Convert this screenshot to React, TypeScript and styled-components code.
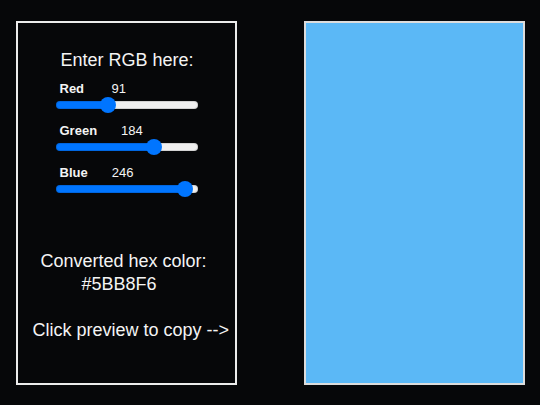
import React, { useState } from "react";
import styled, { createGlobalStyle } from "styled-components";

const GlobalStyle = createGlobalStyle`
  html, body {
    margin: 0;
    padding: 0;
    background: #060709;
  }
  body {
    font-family: "Liberation Sans", Arial, sans-serif;
    color: #f4f4f4;
  }
`;

const Page = styled.div`
  height: 405px;
  display: flex;
  align-items: center;
  justify-content: center;
  gap: 67px;
`;

const Panel = styled.div`
  box-sizing: border-box;
  width: 221px;
  height: 364px;
  border: 2px solid #ececec;
  display: flex;
  flex-direction: column;
  align-items: flex-start;
`;

const Controls = styled(Panel)`
  padding-top: 27px;
`;

const Preview = styled(Panel)<{ $color: string }>`
  border-color: #dcdcdc;
  background: ${(p) => p.$color};
  cursor: pointer;
`;

const Line = styled.div<{ $indent: number; $gap?: number }>`
  font-size: 18px;
  line-height: 21px;
  margin-left: ${(p) => p.$indent}px;
  margin-top: ${(p) => p.$gap ?? 0}px;
  white-space: nowrap;
`;

const Channel = styled.div`
  display: flex;
  flex-direction: column;
  gap: 1px;
  margin-left: 38px;
  margin-top: 10px;
`;

const ChannelHead = styled.div`
  display: flex;
  gap: 24px;
  margin-left: 4px;
  font-size: 13px;
  line-height: 15px;
`;

const ChannelName = styled.span`
  font-weight: 700;
  min-width: 28px;
`;

const ChannelValue = styled.span`
  font-weight: 400;
`;

const Range = styled.input`
  -webkit-appearance: none;
  appearance: none;
  display: block;
  margin: 0;
  padding: 0;
  width: 142px;
  height: 16px;
  background: transparent;
  cursor: pointer;

  &::-webkit-slider-runnable-track {
    height: 8px;
    border-radius: 4px;
    background: linear-gradient(
      to right,
      #0075ff calc(8px + (100% - 16px) * var(--ratio)),
      #efefef 0
    );
    box-shadow: inset 0 0 0 1px rgba(0, 0, 0, 0.12);
  }

  &::-webkit-slider-thumb {
    -webkit-appearance: none;
    appearance: none;
    width: 16px;
    height: 16px;
    margin-top: -4px;
    border-radius: 50%;
    background: #0075ff;
    border: none;
  }
`;

type ChannelKey = "r" | "g" | "b";

const channels: { key: ChannelKey; name: string }[] = [
  { key: "r", name: "Red" },
  { key: "g", name: "Green" },
  { key: "b", name: "Blue" },
];

const toHex = (n: number) => n.toString(16).padStart(2, "0").toUpperCase();

export default function App() {
  const [rgb, setRgb] = useState<Record<ChannelKey, number>>({ r: 91, g: 184, b: 246 });
  const hex = `#${toHex(rgb.r)}${toHex(rgb.g)}${toHex(rgb.b)}`;

  const copy = () => {
    navigator.clipboard?.writeText(hex).catch(() => undefined);
  };

  return (
    <>
      <GlobalStyle />
      <Page>
        <Controls>
          <Line $indent={43}>Enter RGB here:</Line>
          {channels.map((c) => (
            <Channel key={c.key}>
              <ChannelHead>
                <ChannelName>{c.name}</ChannelName>
                <ChannelValue>{rgb[c.key]}</ChannelValue>
              </ChannelHead>
              <Range
                type="range"
                min={0}
                max={255}
                value={rgb[c.key]}
                style={{ ["--ratio" as string]: rgb[c.key] / 255 } as React.CSSProperties}
                onChange={(e) => setRgb({ ...rgb, [c.key]: Number(e.target.value) })}
              />
            </Channel>
          ))}
          <Line $indent={23} $gap={54}>Converted hex color:</Line>
          <Line $indent={64} $gap={2}>{hex}</Line>
          <Line $indent={15} $gap={25}>Click preview to copy --&gt;</Line>
        </Controls>
        <Preview $color={hex} onClick={copy} title="Copy hex" />
      </Page>
    </>
  );
}
